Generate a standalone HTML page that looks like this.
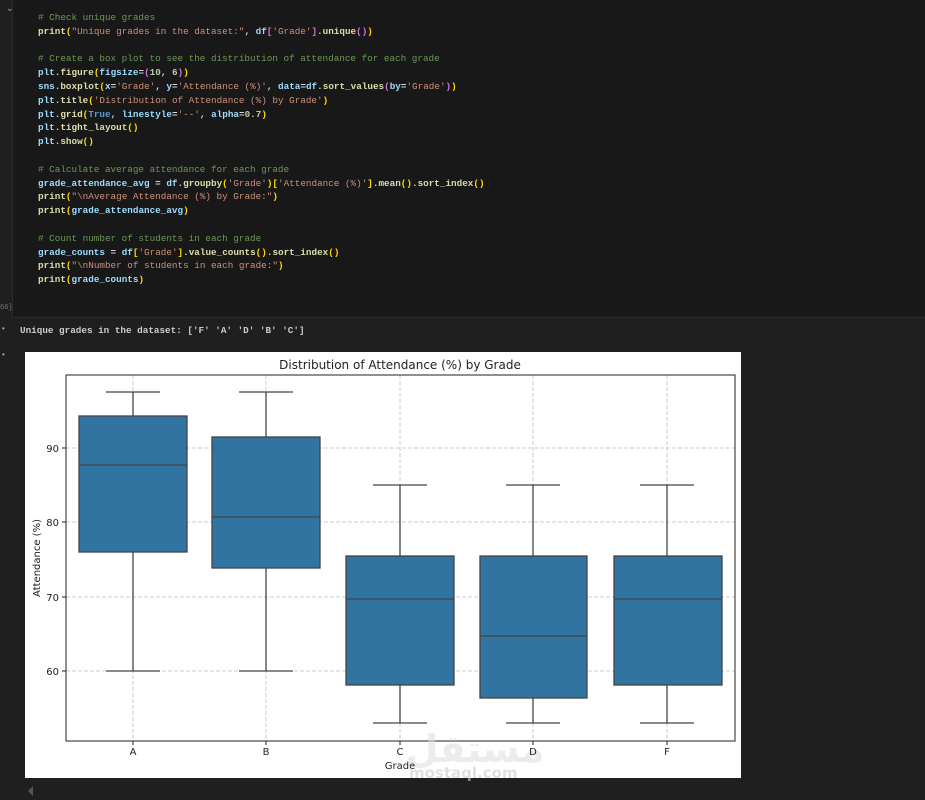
<!DOCTYPE html>
<html><head><meta charset="utf-8"><style>
body{margin:0;width:925px;height:800px;background:#1f1f1f;overflow:hidden;position:relative;font-family:"Liberation Mono",monospace}
.cell{position:absolute;left:12px;top:0;width:913px;height:317px;background:#181818;border-left:1px solid #2b2b2b;border-bottom:1px solid #2b2b2b}
pre{position:absolute;left:38px;top:11px;margin:0;font-size:9.3px;line-height:13.8px;color:#d4d4d4;font-family:"Liberation Mono",monospace;font-weight:bold}
.c{color:#6a9955;font-weight:normal}.f{color:#dcdcaa}.s{color:#ce9178;font-weight:normal}.v{color:#9cdcfe}.p{color:#ffd700}.q{color:#da70d6}.b{color:#569cd6}.n{color:#b5cea8}
.out{position:absolute;left:20px;top:325px;font-size:9.3px;color:#ccc;font-weight:bold}
.chev{position:absolute;left:6px;top:4px;color:#aaa;font-size:9px}
.num{position:absolute;left:0;top:304px;font-size:7px;color:#777}
.plot{position:absolute;left:25px;top:352px;width:716px;height:426px;background:#fff}
</style></head><body>
<div class="cell"></div>
<div class="chev">⌄</div>
<pre><span class="c"># Check unique grades</span>
<span class="f">print</span><span class="p">(</span><span class="s">"Unique grades in the dataset:"</span>, <span class="v">df</span><span class="q">[</span><span class="s">'Grade'</span><span class="q">]</span>.<span class="f">unique</span><span class="q">()</span><span class="p">)</span>

<span class="c"># Create a box plot to see the distribution of attendance for each grade</span>
<span class="v">plt</span>.<span class="f">figure</span><span class="p">(</span><span class="v">figsize</span>=<span class="q">(</span><span class="n">10</span>, <span class="n">6</span><span class="q">)</span><span class="p">)</span>
<span class="v">sns</span>.<span class="f">boxplot</span><span class="p">(</span><span class="v">x</span>=<span class="s">'Grade'</span>, <span class="v">y</span>=<span class="s">'Attendance (%)'</span>, <span class="v">data</span>=<span class="v">df</span>.<span class="f">sort_values</span><span class="q">(</span><span class="v">by</span>=<span class="s">'Grade'</span><span class="q">)</span><span class="p">)</span>
<span class="v">plt</span>.<span class="f">title</span><span class="p">(</span><span class="s">'Distribution of Attendance (%) by Grade'</span><span class="p">)</span>
<span class="v">plt</span>.<span class="f">grid</span><span class="p">(</span><span class="b">True</span>, <span class="v">linestyle</span>=<span class="s">'--'</span>, <span class="v">alpha</span>=<span class="n">0.7</span><span class="p">)</span>
<span class="v">plt</span>.<span class="f">tight_layout</span><span class="p">()</span>
<span class="v">plt</span>.<span class="f">show</span><span class="p">()</span>

<span class="c"># Calculate average attendance for each grade</span>
<span class="v">grade_attendance_avg</span> = <span class="v">df</span>.<span class="f">groupby</span><span class="p">(</span><span class="s">'Grade'</span><span class="p">)</span><span class="p">[</span><span class="s">'Attendance (%)'</span><span class="p">]</span>.<span class="f">mean</span><span class="p">()</span>.<span class="f">sort_index</span><span class="p">()</span>
<span class="f">print</span><span class="p">(</span><span class="s">"\nAverage Attendance (%) by Grade:"</span><span class="p">)</span>
<span class="f">print</span><span class="p">(</span><span class="v">grade_attendance_avg</span><span class="p">)</span>

<span class="c"># Count number of students in each grade</span>
<span class="v">grade_counts</span> = <span class="v">df</span><span class="p">[</span><span class="s">'Grade'</span><span class="p">]</span>.<span class="f">value_counts</span><span class="p">()</span>.<span class="f">sort_index</span><span class="p">()</span>
<span class="f">print</span><span class="p">(</span><span class="s">"\nNumber of students in each grade:"</span><span class="p">)</span>
<span class="f">print</span><span class="p">(</span><span class="v">grade_counts</span><span class="p">)</span></pre>
<div class="num">66]</div>
<div class="out">Unique grades in the dataset: ['F' 'A' 'D' 'B' 'C']</div>
<div style="position:absolute;left:1px;top:325px;color:#aaa;font-size:8px">•</div>
<div style="position:absolute;left:1px;top:351px;color:#aaa;font-size:8px">•</div>
<div class="plot"></div>
<svg style="position:absolute;left:0;top:0" width="925" height="800" font-family="'DejaVu Sans',sans-serif">
<g stroke="#b0b0b0" stroke-width="0.8" stroke-dasharray="4,2" opacity="0.8">
<line x1="133" y1="375" x2="133" y2="741"/><line x1="266" y1="375" x2="266" y2="741"/><line x1="400" y1="375" x2="400" y2="741"/><line x1="533" y1="375" x2="533" y2="741"/><line x1="667" y1="375" x2="667" y2="741"/>
<line x1="66" y1="448" x2="735" y2="448"/><line x1="66" y1="522" x2="735" y2="522"/><line x1="66" y1="597" x2="735" y2="597"/><line x1="66" y1="671" x2="735" y2="671"/>
</g>
<g stroke="#444" stroke-width="1.3" fill="#3274a1">
<line x1="133" y1="392" x2="133" y2="416"/><line x1="133" y1="552" x2="133" y2="671"/><line x1="106" y1="392" x2="160" y2="392"/><line x1="106" y1="671" x2="160" y2="671"/>
<rect x="79" y="416" width="108" height="136"/><line x1="79" y1="465" x2="187" y2="465"/>
<line x1="266" y1="392" x2="266" y2="437"/><line x1="266" y1="568" x2="266" y2="671"/><line x1="239" y1="392" x2="293" y2="392"/><line x1="239" y1="671" x2="293" y2="671"/>
<rect x="212" y="437" width="108" height="131"/><line x1="212" y1="517" x2="320" y2="517"/>
<line x1="400" y1="485" x2="400" y2="556"/><line x1="400" y1="685" x2="400" y2="723"/><line x1="373" y1="485" x2="427" y2="485"/><line x1="373" y1="723" x2="427" y2="723"/>
<rect x="346" y="556" width="108" height="129"/><line x1="346" y1="599" x2="454" y2="599"/>
<line x1="533" y1="485" x2="533" y2="556"/><line x1="533" y1="698" x2="533" y2="723"/><line x1="506" y1="485" x2="560" y2="485"/><line x1="506" y1="723" x2="560" y2="723"/>
<rect x="480" y="556" width="107" height="142"/><line x1="480" y1="636" x2="587" y2="636"/>
<line x1="667" y1="485" x2="667" y2="556"/><line x1="667" y1="685" x2="667" y2="723"/><line x1="640" y1="485" x2="694" y2="485"/><line x1="640" y1="723" x2="694" y2="723"/>
<rect x="614" y="556" width="108" height="129"/><line x1="614" y1="599" x2="722" y2="599"/>
</g>
<rect x="66" y="375" width="669" height="366" fill="none" stroke="#222" stroke-width="1"/>
<g stroke="#222"><line x1="62" y1="448" x2="66" y2="448"/><line x1="62" y1="522" x2="66" y2="522"/><line x1="62" y1="597" x2="66" y2="597"/><line x1="62" y1="671" x2="66" y2="671"/>
<line x1="133" y1="741" x2="133" y2="745"/><line x1="266" y1="741" x2="266" y2="745"/><line x1="400" y1="741" x2="400" y2="745"/><line x1="533" y1="741" x2="533" y2="745"/><line x1="667" y1="741" x2="667" y2="745"/></g>
<text x="475" y="762" font-size="38" fill="#ddd" opacity="0.55" text-anchor="middle" font-weight="bold" font-family="'DejaVu Sans',sans-serif">مستقل</text>
<g font-size="10" fill="#222" text-anchor="middle"><text x="133" y="755">A</text><text x="266" y="755">B</text><text x="400" y="755">C</text><text x="533" y="755">D</text><text x="667" y="755">F</text>
<text x="400" y="769">Grade</text><text x="400" y="369" font-size="12">Distribution of Attendance (%) by Grade</text>
<text transform="translate(40,558) rotate(-90)">Attendance (%)</text></g>
<g font-size="10" fill="#222" text-anchor="end"><text x="59" y="452">90</text><text x="59" y="526">80</text><text x="59" y="601">70</text><text x="59" y="675">60</text></g>
<text x="409" y="778" font-size="15" fill="#ccc" opacity="0.6" font-weight="bold">mostaql.com</text>
<polygon points="33,786 28,791 33,796" fill="#555"/>
</svg>
</body></html>
